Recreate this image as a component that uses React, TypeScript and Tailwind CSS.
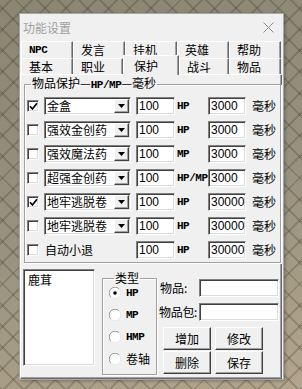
import React from "react";

const sunken =
  "border border-t-[#808080] border-l-[#808080] border-b-white border-r-white shadow-[inset_1px_1px_#404040,inset_-1px_-1px_#dcdcdc]";
const raised =
  "border border-t-white border-l-white border-b-[#404040] border-r-[#404040] shadow-[inset_-1px_-1px_#a0a0a0]";
const latin = "font-['Liberation_Mono',monospace] text-[11px] font-bold tracking-[-0.5px]";
const cjk = "text-[12px] font-['Noto_Sans_CJK_SC',sans-serif]";

const rows = [
  { checked: true, item: "金盒", unit: "HP", ms: "3000" },
  { checked: false, item: "强效金创药", unit: "HP", ms: "3000" },
  { checked: false, item: "强效魔法药", unit: "MP", ms: "3000" },
  { checked: false, item: "超强金创药", unit: "HP/MP", ms: "3000" },
  { checked: true, item: "地牢逃脱卷", unit: "HP", ms: "30000" },
  { checked: false, item: "地牢逃脱卷", unit: "HP", ms: "30000" },
  { checked: false, item: null, unit: "HP", ms: "30000" },
];

const Tab = ({ label, w, mono }: { label: string; w: string; mono?: boolean }) => (
  <div
    className={`${w} h-full flex items-center pl-[7px] border-t border-l border-white border-r border-r-[#696969] shadow-[inset_-1px_0_#a0a0a0] ${
      mono ? latin : cjk
    }`}
  >
    {label}
  </div>
);

const CheckBox = ({ checked }: { checked: boolean }) => (
  <div className={`w-[12px] h-[12px] bg-white ${sunken} flex items-center justify-center`}>
    {checked && (
      <svg width="9" height="9" viewBox="0 0 9 9">
        <path d="M1 4.2 L3.4 7 L8 1.2" fill="none" stroke="#000" strokeWidth="1.7" />
      </svg>
    )}
  </div>
);

const Radio = ({ on }: { on?: boolean }) => (
  <svg width="12" height="12" viewBox="0 0 12 12">
    <circle cx="6" cy="6" r="5.5" fill="#fff" />
    <path d="M1.9 10.1 A5.5 5.5 0 0 1 10.1 1.9" fill="none" stroke="#9a9a9a" strokeWidth="1" />
    <path d="M10.1 1.9 A5.5 5.5 0 0 1 1.9 10.1" fill="none" stroke="#e8e8e8" strokeWidth="1" />
    {on && <circle cx="6" cy="6" r="1.8" fill="#000" />}
  </svg>
);

const Edit = ({ value, w }: { value?: string; w: string }) => (
  <div className={`${w} h-[18px] bg-white ${sunken} flex items-center pl-[2px] text-[12px] font-['Liberation_Sans',sans-serif]`}>
    {value}
  </div>
);

export default function App() {
  return (
    <div className="w-[302px] h-[389px] overflow-hidden pt-[13px] pl-[19px] bg-[repeating-linear-gradient(45deg,rgba(40,38,30,0.2)_0_2px,transparent_2px_15px),repeating-linear-gradient(-45deg,rgba(40,38,30,0.2)_0_2px,transparent_2px_15px),linear-gradient(165deg,#8a8672,#989380_55%,#b3a58b)] font-['Liberation_Sans','Noto_Sans_CJK_SC',sans-serif] text-black">
      <div className="w-[265px] h-[367px] bg-[#f0f0f0] border border-[#a8a8a8] shadow-[1px_1px_3px_rgba(0,0,0,0.3)] flex flex-col">
        {/* title */}
        <div className="h-[27px] flex items-center justify-between pl-[3px] pr-[9px]">
          <span className="text-[12px] text-[#a0a0a0] font-['Noto_Sans_CJK_SC',sans-serif]">功能设置</span>
          <svg width="11" height="11" viewBox="0 0 11 11">
            <path d="M0.5 0.5 L10.5 10.5 M10.5 0.5 L0.5 10.5" stroke="#8c8c8c" strokeWidth="1" />
          </svg>
        </div>

        {/* tabs */}
        <div className="ml-[1px] flex h-[17px]">
          <Tab label="NPC" w="w-[52px]" mono />
          <Tab label="发言" w="w-[52px]" />
          <Tab label="挂机" w="w-[52px]" />
          <Tab label="英雄" w="w-[52px]" />
          <Tab label="帮助" w="w-[52px]" />
        </div>
        <div className="ml-[1px] flex h-[16px] items-start">
          <Tab label="基本" w="w-[52px]" />
          <Tab label="职业" w="w-[50px]" />
          <div className={`relative z-10 w-[56px] h-[20px] -mt-[3px] bg-[#f0f0f0] border-t border-l border-white border-r border-r-[#696969] shadow-[inset_-1px_0_#a0a0a0] flex items-start pt-[1px] pl-[10px] ${cjk}`}>
            保护
          </div>
          <Tab label="战斗" w="w-[50px]" />
          <Tab label="物品" w="w-[52px]" />
        </div>

        {/* page */}
        <div className="w-[262px] h-[305px] border-t border-l border-white border-r border-b border-r-[#696969] border-b-[#696969] shadow-[inset_-1px_-1px_#a0a0a0]">
          <fieldset className="ml-[3px] w-[257px] border border-[#a0a0a0] shadow-[inset_1px_1px_#fff,1px_1px_#fff] pl-[2px] pt-[4px] pb-[3px]">
            <legend className={`ml-[4px] px-[1px] leading-[16px] ${cjk}`}>
              物品保护—<span className={latin}>HP/MP</span>—毫秒
            </legend>
            <div className="flex flex-col gap-[6px]">
              {rows.map((r, i) => (
                <div key={i} className="h-[18px] flex items-center">
                  <CheckBox checked={r.checked} />
                  {r.item ? (
                    <div className={`ml-[5px] w-[87px] h-[18px] bg-white ${sunken} flex items-center justify-between pl-[2px] pr-[1px]`}>
                      <span className={`${cjk} leading-none`}>{r.item}</span>
                      <div className={`w-[15px] h-[14px] bg-[#f0f0f0] ${raised} flex items-center justify-center`}>
                        <svg width="7" height="4" viewBox="0 0 7 4">
                          <path d="M0 0 H7 L3.5 4 Z" fill="#000" />
                        </svg>
                      </div>
                    </div>
                  ) : (
                    <div className={`ml-[5px] w-[87px] pl-[1px] ${cjk}`}>自动小退</div>
                  )}
                  <div className="ml-[5px]">
                    <Edit value="100" w="w-[39px]" />
                  </div>
                  <div className={`w-[33px] pl-[2px] ${latin}`}>{r.unit}</div>
                  <Edit value={r.ms} w="w-[38px]" />
                  <div className={`ml-[6px] ${cjk}`}>毫秒</div>
                </div>
              ))}
            </div>
          </fieldset>

          <div className="flex items-start mt-[6px]">
            <div className={`ml-[2px] w-[72px] h-[97px] bg-white ${sunken} pl-[4px] pt-[2px] leading-[16px] ${cjk}`}>
              鹿茸
            </div>
            <fieldset className="ml-[7px] mt-[1px] w-[55px] h-[105px] border border-[#a0a0a0] shadow-[inset_1px_1px_#fff,1px_1px_#fff] pl-[6px]">
              <legend className={`ml-[5px] px-[1px] leading-[16px] ${cjk}`}>类型</legend>
              <div className="-mt-[4px] flex flex-col">
                {[
                  { l: "HP", on: true, mono: true },
                  { l: "MP", mono: true },
                  { l: "HMP", mono: true },
                  { l: "卷轴" },
                ].map((o) => (
                  <div key={o.l} className="h-[22px] flex items-center gap-[5px]">
                    <Radio on={o.on} />
                    <span className={o.mono ? latin : cjk}>{o.l}</span>
                  </div>
                ))}
              </div>
            </fieldset>
            <div className="ml-[2px] mt-[10px] flex flex-col">
              <div className="flex items-center h-[18px]">
                <span className={`w-[40px] pl-[1px] ${cjk}`}>物品:</span>
                <Edit w="w-[80px]" />
              </div>
              <div className="flex items-center h-[18px] mt-[6px]">
                <span className={`w-[40px] tracking-[-0.3px] ${cjk}`}>物品包:</span>
                <Edit w="w-[80px]" />
              </div>
              <div className="ml-[4px] mt-[6px] grid grid-cols-[48px_48px] gap-x-[4px] gap-y-[1px]">
                {["增加", "修改", "删除", "保存"].map((b) => (
                  <div key={b} className={`h-[23px] bg-[#f0f0f0] ${raised} flex items-center justify-center ${cjk}`}>
                    {b}
                  </div>
                ))}
              </div>
            </div>
          </div>
        </div>
      </div>
    </div>
  );
}
